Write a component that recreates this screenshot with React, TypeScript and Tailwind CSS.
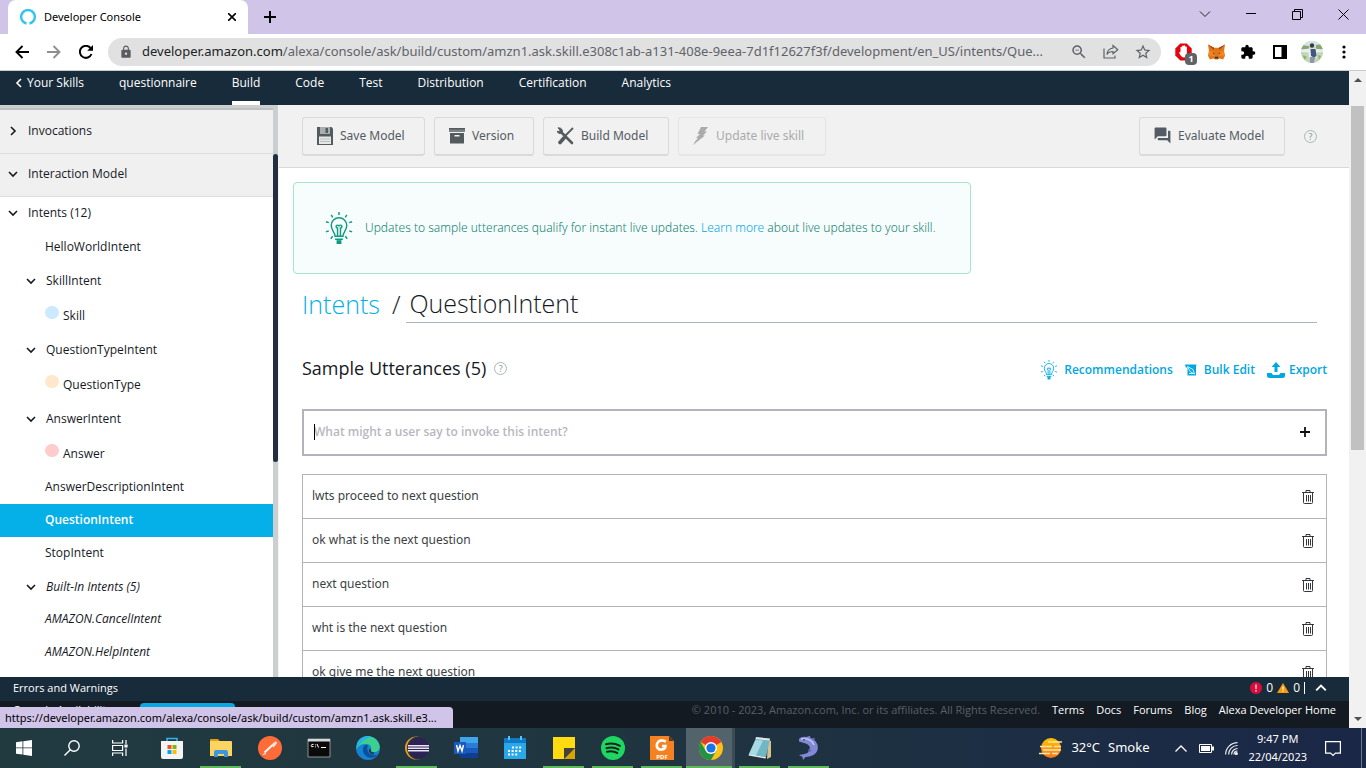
import type { ReactNode } from "react";
import { MdExtension, MdForum, MdLock, MdStarBorder, MdZoomOut } from "react-icons/md";

const chromeFont = "font-['Noto_Sans','Open_Sans',sans-serif]";

function Chevron({ dir, className = "" }: { dir: "down" | "right" | "left" | "up"; className?: string }) {
  const d = { down: "M1 3l4 4 4-4", up: "M1 7l4-4 4 4", right: "M3 1l4 4-4 4", left: "M7 1L3 5l4 4" }[dir];
  return (
    <svg viewBox="0 0 10 10" className={`h-2.5 w-2.5 shrink-0 ${className}`} fill="none" stroke="currentColor" strokeWidth="1.6">
      <path d={d} />
    </svg>
  );
}

function Bulb({ className }: { className: string }) {
  return (
    <svg viewBox="0 0 28 34" className={className} fill="none" stroke="currentColor" strokeWidth="1.5">
      <path d="M10 25c0-4-4-6-4-11a8 8 0 0 1 16 0c0 5-4 7-4 11z" />
      <path d="M12.500 25v-8.500a1.500 1.500 0 1 1 1.500-1.500a1.500 1.500 0 1 1 1.500 1.500V25M10 28h8" />
      <path d="M11.500 31h5" strokeWidth="4" />
      <path d="M14 0v3M6 3l1.500 2.500M22 3l-1.500 2.500M.5 10l3 1M27.500 10l-3 1M.5 20.500l3-1M27.500 20.500l-3-1M5.500 27.500l2-2.500M22.500 27.500l-2-2.500" />
    </svg>
  );
}

function Help() {
  return (
    <button aria-label="Help" className="grid h-[13px] w-[13px] place-items-center rounded-full border border-[#a9b7b7] text-[9px] leading-none text-[#879596]">
      ?
    </button>
  );
}

/* ---------- Browser chrome ---------- */

function TabStrip() {
  return (
    <div className="flex h-[34px] shrink-0 items-stretch bg-[#d1c4e9] text-black">
      <div className="ml-2 flex w-60 items-center rounded-t-lg bg-white pr-2 pl-3">
        <svg viewBox="0 0 16 16" className="h-4 w-4" fill="none" stroke="#31c4f3" strokeWidth="2.400">
          <path d="M6.500 14.500a6.800 6.800 0 1 1 3 0" />
        </svg>
        <span className="ml-2 flex-1 text-[11px]">Developer Console</span>
        <button aria-label="Close tab" className="p-1">
          <svg viewBox="0 0 8 8" className="h-2 w-2" stroke="#000" strokeWidth="1.600"><path d="M0 0l8 8M8 0L0 8" /></svg>
        </button>
      </div>
      <button aria-label="New tab" className="ml-2 px-2">
        <svg viewBox="0 0 12 12" className="h-3 w-3" stroke="#000" strokeWidth="2"><path d="M6 0v12M0 6h12" /></svg>
      </button>
      <div className="ml-auto flex items-center pb-1.5">
        <button aria-label="Tab search" className="grid w-[46px] place-items-center">
          <svg viewBox="0 0 12 7" className="h-[7px] w-3" fill="none" stroke="#222"><path d="M1 .5l5 5 5-5" /></svg>
        </button>
        <button aria-label="Minimise" className="grid w-[46px] place-items-center">
          <svg viewBox="0 0 10 2" className="h-0.5 w-2.5"><path d="M0 .5h10" stroke="#000" /></svg>
        </button>
        <button aria-label="Restore" className="grid w-[46px] place-items-center">
          <svg viewBox="0 0 11 11" className="h-[11px] w-[11px]" fill="none" stroke="#000"><path d="M.5 2.500h8v8h-8zM2.500 2.500v-2h8v8h-2" /></svg>
        </button>
        <button aria-label="Close" className="grid w-[46px] place-items-center">
          <svg viewBox="0 0 11 11" className="h-[11px] w-[11px]" stroke="#000"><path d="M.5.5l10 10M10.500.5l-10 10" /></svg>
        </button>
      </div>
    </div>
  );
}

function ToolbarSlot({ label, children }: { label: string; children: ReactNode }) {
  return (
    <button aria-label={label} className="grid h-8 w-8 place-items-center">
      {children}
    </button>
  );
}

function AddressBar() {
  return (
    <div className="flex h-[37px] shrink-0 items-center border-b border-[#c8cccc] bg-white text-black">
      <button aria-label="Back" className="ml-[15px]">
        <svg viewBox="0 0 14 14" className="h-3.5 w-3.5" fill="none" stroke="#000" strokeWidth="1.900"><path d="M14 7H1.500M7.500 1L1.500 7l6 6" /></svg>
      </button>
      <button aria-label="Forward" className="ml-[18px]">
        <svg viewBox="0 0 14 14" className="h-3.5 w-3.5" fill="none" stroke="#8f8f8f" strokeWidth="1.900"><path d="M0 7h12.500M6.500 1l6 6-6 6" /></svg>
      </button>
      <button aria-label="Reload" className="ml-[18px]">
        <svg viewBox="0 0 14 14" className="h-3.5 w-3.5" fill="none" stroke="#000" strokeWidth="2"><path d="M12.500 9A6 6 0 1 1 11.500 3" /><path d="M14 0v5.800H8.200z" fill="#000" stroke="none" /></svg>
      </button>
      <div className="ml-[15px] flex h-7 min-w-0 flex-1 items-center rounded-full bg-[#e1e1e1] pr-[9px] pl-[11px]">
        <MdLock className="h-3.5 w-3.5 shrink-0 text-[#5a5c60]" />
        <div className="ml-[9px] min-w-0 flex-1 truncate text-[13px] text-[#5f6368]">
          <span className="text-[#202124]">developer.amazon.com</span>/alexa/console/ask/build/custom/amzn1.ask.skill.e308c1ab-a131-408e-9eea-7d1f12627f3f/development/en_US/intents/Que...
        </div>
        <div className="flex items-center gap-[15px] text-[#5f6368]">
          <button aria-label="Zoom"><MdZoomOut className="h-[18px] w-[18px]" /></button>
          <button aria-label="Share">
            <svg viewBox="0 0 16 16" className="h-4 w-4" fill="none" stroke="currentColor" strokeWidth="1.200"><path d="M1 4.500V14h11v-2.500M10 1.500l4.800 4.200L10 9.800V7.500c-3 0-4.800.8-6 3 .3-3.800 2.300-6 6-6.500z" /></svg>
          </button>
          <button aria-label="Bookmark"><MdStarBorder className="h-[18px] w-[18px]" /></button>
        </div>
      </div>
      <div className="flex shrink-0 items-center pr-1.5 pl-[7px]">
        <ToolbarSlot label="Content blocker, 1 blocked">
          <span className="relative block h-[18px] w-[18px]">
            <svg viewBox="0 0 18 18" className="h-full w-full">
              <path d="M5.300.5h6.400l5 5v7l-5 5H5.300l-5-5v-7z" fill="#e3050b" />
              <path d="M5.500 9V4.500a.8.8 0 0 1 1.600 0V3.300a.8.8 0 0 1 1.600 0V3a.8.8 0 0 1 1.600 0v1.300a.8.8 0 0 1 1.600 0V11c0 2-1.200 3.500-3 3.500S5.500 12.800 4 9.500z" fill="#fff" />
            </svg>
            <span className="absolute top-2.5 left-2.5 h-3 w-3 rounded-sm bg-[#5f6368] text-center text-[9px] leading-3 font-bold text-white">1</span>
          </span>
        </ToolbarSlot>
        <ToolbarSlot label="Wallet">
          <svg viewBox="0 0 18 16" className="h-4 w-[17px]">
            <path d="M0 0l6.500 3.500h5L18 0l-1 7 1 5-2 4-4-1-1.500 1h-3L6 15l-4 1-2-4 1-5z" fill="#e2761b" />
            <path d="M0 0l6.500 3.500L6 6zM18 0l-6.500 3.500.5 2.500z" fill="#a8480f" />
            <path d="M1 7l5 1 1 4-6 0zM17 7l-5 1-1 4 6 0z" fill="#f6851b" />
            <path d="M5 8.500l2 1-1.500.6zM13 8.500l-2 1 1.500.6zM7.500 13h3l.5 2H7z" fill="#233447" />
          </svg>
        </ToolbarSlot>
        <ToolbarSlot label="Extensions"><MdExtension className="h-4 w-4" /></ToolbarSlot>
        <ToolbarSlot label="Side panel">
          <svg viewBox="0 0 14 14" className="h-3.5 w-3.5"><path d="M0 0h14v14H0zM2 2v10h6.500V2z" fillRule="evenodd" /></svg>
        </ToolbarSlot>
        <ToolbarSlot label="Profile">
          <svg viewBox="0 0 22 22" className="h-[22px] w-[22px]">
            <defs><clipPath id="avatar"><circle cx="11" cy="11" r="11" /></clipPath></defs>
            <g clipPath="url(#avatar)">
              <path d="M0 0h22v22H0z" fill="#c3d6b4" />
              <path d="M0 0h22v6H0z" fill="#d5e4ea" />
              <path d="M0 4l8 1v3H0zM15 4l7-1v5h-7z" fill="#8aa66f" />
              <path d="M0 9l8-1.500h6l8 1.500v2l-7 .5 1 5H8l-.5-5L0 11z" fill="#e9eef5" />
              <circle cx="11" cy="4.500" r="2.200" fill="#3a3a44" />
              <path d="M9.500 8h5l1 7-2.500 1.500L10 15z" fill="#42567c" />
              <path d="M9 16h5l-1 6H9z" fill="#8a95b3" />
              <path d="M2 14l4 2-3 3zM17 14l3 1-2 4z" fill="#8fb26e" />
            </g>
          </svg>
        </ToolbarSlot>
        <ToolbarSlot label="Browser menu">
          <svg viewBox="0 0 4 14" className="h-3.5 w-1"><circle cx="2" cy="2" r="1.600" /><circle cx="2" cy="7" r="1.600" /><circle cx="2" cy="12" r="1.600" /></svg>
        </ToolbarSlot>
      </div>
    </div>
  );
}

function PageScrollbar() {
  return (
    <div className="flex w-[17px] shrink-0 flex-col items-center bg-[#f1f1f1]">
      <svg viewBox="0 0 8 4" className="mt-[7px] h-1 w-2 shrink-0"><path d="M0 4l4-4 4 4z" fill="#505050" /></svg>
      <div className="mt-6 h-[344px] w-[13px] bg-[#c1c1c1]" />
      <svg viewBox="0 0 8 4" className="mt-auto mb-[7px] h-1 w-2 shrink-0"><path d="M0 0l4 4 4-4z" fill="#505050" /></svg>
    </div>
  );
}

/* ---------- Console page ---------- */

function ConsoleNav() {
  const tabs = ["questionnaire", "Build", "Code", "Test", "Distribution", "Certification", "Analytics"];
  return (
    <nav className="flex h-[34px] shrink-0 gap-[35px] bg-[#182b3a] pl-3.5 text-[12px] leading-5 text-white">
      <a href="#skills" className="flex items-center gap-[3px] self-start pt-0.5">
        <Chevron dir="left" />
        Your Skills
      </a>
      {tabs.map((t) => (
        <a key={t} href={`#${t}`} className={`border-b-4 pt-0.5 ${t === "Build" ? "border-white" : "border-transparent"}`}>
          {t}
        </a>
      ))}
    </nav>
  );
}

type Row = { label: string; kind: "group" | "leaf" | "slot"; color?: string; selected?: boolean; italic?: boolean };

const rows: Row[] = [
  { label: "HelloWorldIntent", kind: "leaf" },
  { label: "SkillIntent", kind: "group" },
  { label: "Skill", kind: "slot", color: "bg-[#cce9ff]" },
  { label: "QuestionTypeIntent", kind: "group" },
  { label: "QuestionType", kind: "slot", color: "bg-[#ffe8cc]" },
  { label: "AnswerIntent", kind: "group" },
  { label: "Answer", kind: "slot", color: "bg-[#ffcccc]" },
  { label: "AnswerDescriptionIntent", kind: "leaf" },
  { label: "QuestionIntent", kind: "leaf", selected: true },
  { label: "StopIntent", kind: "leaf" },
  { label: "Built-In Intents (5)", kind: "group", italic: true },
  { label: "AMAZON.CancelIntent", kind: "leaf", italic: true },
  { label: "AMAZON.HelpIntent", kind: "leaf", italic: true },
];

function TreeRow({ row }: { row: Row }) {
  const tone = row.selected ? "bg-[#05b0e8] font-semibold text-white" : "text-[#16191f]";
  const style = row.italic ? "italic" : "";
  if (row.kind === "group")
    return (
      <button className={`flex w-full items-center gap-2.5 pl-[26px] ${row.italic ? "h-[33px]" : "h-[34px]"} ${tone} ${style}`}>
        <Chevron dir="down" />
        {row.label}
      </button>
    );
  if (row.kind === "slot")
    return (
      <a href={`#${row.label}`} className={`flex h-[35px] items-center gap-1 pl-[45px] ${tone}`}>
        <span className={`mb-1.5 h-[13px] w-3.5 rounded-full ${row.color}`} />
        {row.label}
      </a>
    );
  return (
    <a href={`#${row.label}`} className={`flex h-[33px] items-center pb-0.5 pl-[45px] ${tone} ${style}`}>
      {row.label}
    </a>
  );
}

function Sidebar() {
  return (
    <aside className="flex w-[279px] shrink-0 border-r border-[#f3f3f3] bg-[#cbcfcf] pt-[3px] text-[12px]">
      <div className="min-w-0 flex-1 overflow-hidden border-t-2 border-[#bfc2c2] bg-white">
        <button className="flex h-11 w-full items-center gap-2.5 border-b border-[#dcdfdf] bg-[#f0f0f0] pb-0.5 pl-2 text-[#16191f]">
          <Chevron dir="right" />
          Invocations
        </button>
        <button className="flex h-[43px] w-full items-center gap-2.5 border-b border-[#dcdfdf] bg-[#f0f0f0] pb-0.5 pl-2 text-[#16191f]">
          <Chevron dir="down" />
          Interaction Model
        </button>
        <button className="flex h-[34px] w-full items-center gap-2.5 pb-[3px] pl-2 text-[#16191f]">
          <Chevron dir="down" />
          Intents (12)
        </button>
        {rows.map((r) => (
          <TreeRow key={r.label} row={r} />
        ))}
      </div>
      <div className="w-[5px] shrink-0 pt-[46px]">
        <div className="h-[308px] rounded-full bg-[#232f3e]" />
      </div>
    </aside>
  );
}

function ToolButton({ icon, children, width, disabled = false }: { icon: ReactNode; children: ReactNode; width: string; disabled?: boolean }) {
  return (
    <button
      disabled={disabled}
      className={`flex h-[39px] items-center gap-1.5 rounded-[3px] border border-b-2 pl-[13px] ${width} ${disabled ? "border-[#e6e6e6] text-[#a9abad]" : "border-[#d9dada] text-[#545b64]"}`}
    >
      {icon}
      {children}
    </button>
  );
}

function Toolbar() {
  return (
    <div className={`flex h-[63px] shrink-0 items-center gap-[9px] border-b border-[#d5dbdb] bg-[#f1f1f1] pr-8 pl-[23px] text-[12px] ${chromeFont}`}>
      <ToolButton
        width="w-[123px]"
        icon={
          <svg viewBox="0 0 18 18" className="h-[18px] w-[18px]">
            <path d="M1 0h14.500L17 1.500V18H1z" fill="#545b5e" />
            <path d="M4 0h10v7H4z" fill="#a9adaf" />
            <path d="M9.500 1h2.500v5H9.500z" fill="#545b5e" />
            <path d="M3 9.500h12V17H3z" fill="#e8e8e8" />
            <path d="M4 12h10M4 14.500h10" stroke="#b9bcbd" />
          </svg>
        }
      >
        Save Model
      </ToolButton>
      <ToolButton
        width="w-[100px]"
        icon={
          <svg viewBox="0 0 18 18" className="h-[18px] w-[18px]">
            <path d="M1 1h16v4H1z" fill="#7c8285" />
            <path d="M1 1h16v1.500H1zM2 6h14v10.500H2z" fill="#545b5e" />
            <path d="M6.500 8h5v1.500h-5z" fill="#f1f1f1" />
          </svg>
        }
      >
        Version
      </ToolButton>
      <ToolButton
        width="w-[126px]"
        icon={
          <svg viewBox="0 0 18 18" className="h-[18px] w-[18px]" fill="none" stroke="#545b5e">
            <path d="M4 5l11 11" strokeWidth="2.600" strokeLinecap="round" />
            <path d="M3.500 1.200L1 .8l2 2.400-1 1.600-2-.6a3.400 3.400 0 0 0 5 1.800 3.400 3.400 0 0 0-1.500-4.800z" fill="#545b5e" />
            <path d="M16 1L8 9" strokeWidth="1.800" />
            <path d="M7 11l-4 4.500" strokeWidth="3.600" strokeLinecap="round" />
          </svg>
        }
      >
        Build Model
      </ToolButton>
      <ToolButton
        disabled
        width="w-[148px]"
        icon={
          <svg viewBox="0 0 18 18" className="h-[18px] w-[18px]" fill="#a9abad">
            <path d="M9 0h7l-3.500 4.500H15l-4 4h2L3.500 16 1 18l2-3.500L6 11H4l4-4H5.500z" />
          </svg>
        }
      >
        Update live skill
      </ToolButton>
      <div className="ml-auto flex items-center gap-[19px]">
        <ToolButton width="w-[146px]" icon={<MdForum className="h-[19px] w-[19px]" />}>
          Evaluate Model
        </ToolButton>
        <Help />
      </div>
    </div>
  );
}

function Trash() {
  return (
    <svg viewBox="0 0 12 14" className="h-3.5 w-3" fill="none" stroke="#33363b">
      <path d="M0 2.500h12M4 2V.5h4V2M1.500 3v9.500q0 1 1 1h7q1 0 1-1V3M4.500 5v6.500M6.500 5v6.500M8.500 5v6.500" />
    </svg>
  );
}

function UtterancesHeader() {
  return (
    <div className="mt-[29px] flex items-center text-[#00a8e1]">
      <h2 className="text-[18px] leading-8 text-[#16191f]">Sample Utterances (5)</h2>
      <div className="ml-2 flex"><Help /></div>
      <div className="ml-auto flex items-center gap-3 pt-1 text-[12px] font-semibold">
        <button className="flex items-center gap-1.5">
          <Bulb className="h-5 w-[18px]" />
          Recommendations
        </button>
        <button className="flex items-center gap-[7px]">
          <svg viewBox="0 0 12 12" className="h-3 w-3">
            <path d="M0 .5h11.500L11 3v8.500H2.500V3.500H.8z" fill="currentColor" />
            <path d="M2.500 2.500l5.500 3 1.500 4.500L5 7.500zM4 9.500h4" stroke="#fff" strokeWidth=".8" fill="none" />
          </svg>
          Bulk Edit
        </button>
        <button className="flex items-center gap-1">
          <svg viewBox="0 0 18 16" className="h-4 w-[18px]" fill="currentColor">
            <path d="M9 0l4.500 5H10.500v5h-3V5H4.500zM0 11h4.500l1.500 2h6l1.500-2H18v2.500q0 2.500-2.500 2.500h-13Q0 16 0 13.500z" />
          </svg>
          Export
        </button>
      </div>
    </div>
  );
}

function Main() {
  const utterances = [
    "lwts proceed to next question",
    "ok what is the next question",
    "next question",
    "wht is the next question",
    "ok give me the next question",
  ];
  return (
    <main className="flex min-w-0 flex-1 flex-col overflow-hidden bg-white">
      <Toolbar />
      <div className={`mt-3.5 ml-3.5 flex h-[92px] w-[678px] max-w-full shrink-0 items-center gap-3 rounded border border-[#a3e4cb] bg-[#f7fdfd] pl-[31px] text-[12px] font-light text-[#128272] ${chromeFont}`}>
        <Bulb className="h-[33px] w-7 text-[#0f9a83]" />
        <p>
          Updates to sample utterances qualify for instant live updates. <a href="#learn" className="text-[#00a8e1]">Learn more</a> about live updates to your skill.
        </p>
      </div>
      <div className="pr-[22px] pl-[23px]">
        <div className="mt-2.5 flex items-center text-[25px] leading-9 font-light text-[#16191f]">
          <a href="#intents" className="text-[#00b0e8]">Intents</a>
          <span className="ml-3">/</span>
          <input aria-label="Intent name" defaultValue="QuestionIntent" className="mr-2.5 ml-1.5 h-[39px] min-w-0 flex-1 border-b border-[#aab7b8] pl-[3px] outline-none" />
        </div>
        <UtterancesHeader />
        <div className="relative mt-[25px] flex h-[47px] items-center border-2 border-[#b3b3bb] pr-[15px] pb-0.5 pl-2.5">
          <span className="absolute left-2.5 h-4 w-px bg-black" />
          <input aria-label="New sample utterance" placeholder="What might a user say to invoke this intent?" className="min-w-0 flex-1 text-[12px] font-semibold outline-none placeholder:text-[#b7b8c0]" />
          <button aria-label="Add utterance">
            <svg viewBox="0 0 10 10" className="h-2.5 w-2.5" stroke="#111" strokeWidth="1.800"><path d="M5 0v10M0 5h10" /></svg>
          </button>
        </div>
        <ul className={`mt-[18px] border border-[#b3b3bb] text-[12px] text-[#3c3f45] ${chromeFont}`}>
          {utterances.map((u) => (
            <li key={u} className="flex h-11 items-center justify-between border-b border-[#b3b3bb] pr-3 pl-[9px]">
              <span className="pb-0.5">{u}</span>
              <button aria-label={`Delete ${u}`}><Trash /></button>
            </li>
          ))}
        </ul>
      </div>
    </main>
  );
}

function ErrorsBar() {
  return (
    <div className="flex h-6 shrink-0 items-center bg-[#182b3a] pr-[22px] pb-0.5 pl-[13px] text-[11px] text-white">
      <span className="flex-1">Errors and Warnings</span>
      <svg viewBox="0 0 12 12" className="mr-1 h-3 w-3"><circle cx="6" cy="6" r="6" fill="#dd0b3c" /><path d="M6 2.500v4.500M6 8v1.500" stroke="#fff" strokeWidth="1.200" /></svg>
      <span className="text-[12px]">0</span>
      <svg viewBox="0 0 12 10" className="mx-1 h-2.5 w-3"><path d="M6 0l6 10H0z" fill="#f59a0b" /><path d="M6 3.500v3M6 7.500v1.200" stroke="#fff" strokeWidth="1.200" /></svg>
      <span className="text-[12px]">0</span>
      <span className="mr-2.5 ml-1 h-3 w-px bg-white" />
      <button aria-label="Expand errors"><Chevron dir="up" className="h-3 w-3" /></button>
    </div>
  );
}

function Footer() {
  return (
    <footer className="flex h-[27px] shrink-0 items-start gap-3 overflow-hidden bg-[#131a22] pr-[13px] pl-[13px] text-[11px] leading-[18px] text-white">
      <span className="w-[115px]">Console Availability</span>
      <span className="mt-0.5 h-6 w-[95px] rounded bg-[#05a8e0]" />
      <span className="ml-auto text-[#57606a]">© 2010 - 2023, Amazon.com, Inc. or its affiliates. All Rights Reserved.</span>
      {["Terms", "Docs", "Forums", "Blog", "Alexa Developer Home"].map((l) => (
        <a key={l} href={`#${l}`}>{l}</a>
      ))}
    </footer>
  );
}

/* ---------- Taskbar ---------- */

type TaskbarApp = { name: string; state?: "open" | "active"; icon: ReactNode };

const apps: TaskbarApp[] = [
  {
    name: "Store",
    icon: (
      <>
        <path d="M7 6V2.500h10V6" fill="none" stroke="#2bb5f0" strokeWidth="1.600" />
        <path d="M1 5h22v16q0 2-2 2H3q-2 0-2-2z" fill="#f4f4f4" />
        <path d="M7.500 9h4v4h-4z" fill="#f25022" /><path d="M12.500 9h4v4h-4z" fill="#7fba00" />
        <path d="M7.500 14h4v4h-4z" fill="#00a4ef" /><path d="M12.500 14h4v4h-4z" fill="#ffb900" />
      </>
    ),
  },
  {
    name: "File Explorer",
    state: "open",
    icon: (
      <>
        <path d="M1 4q0-1 1-1h7l2 2.500H1z" fill="#e0a010" />
        <path d="M1 5h21q1 0 1 1v14H1z" fill="#fcd462" />
        <path d="M5 21v-5q0-2 2-2h10q2 0 2 2v5h-4v-3H9v3z" fill="#3d97dc" />
      </>
    ),
  },
  {
    name: "Postman",
    icon: (
      <>
        <circle cx="12" cy="12" r="12" fill="#ff6c37" />
        <path d="M6.500 16.500L14 9.500" stroke="#fff" strokeWidth="1.800" />
        <path d="M13 9l4-3.500q2-.5 2 2L15.500 11.500z" fill="#ffe3d8" />
        <path d="M5 18.500l3-1" stroke="#fff" strokeWidth="1.200" />
      </>
    ),
  },
  {
    name: "Command Prompt",
    icon: (
      <>
        <path d="M1 3h22v18H1z" fill="#0b0b0b" stroke="#8d9294" />
        <path d="M1 3h22v2.500H1z" fill="#d5d8d9" />
        <path d="M6.500 8.500q-2-.8-2.300 1t2.300 1M8.500 8.500v.8M8.500 10.500v.8M10 8l1.500 3.500M14 11.500h5" stroke="#fff" fill="none" />
      </>
    ),
  },
  {
    name: "Edge",
    icon: (
      <>
        <circle cx="12" cy="12" r="12" fill="#1583d3" />
        <path d="M1 8C4-1 19-3 23 8c2 5-1 8-4.500 8-4 0-4.500-1.500-3.500-3 .8-3-2-5-5-5C6 8 2 9 .5 14z" fill="#3dcf8e" />
        <path d="M1 8C3 1 10-1 15 .5 9 3 4 6 .5 13z" fill="#27b3e8" />
        <path d="M9 9c-4 3-2 11 4 12.500 4 1 7-1 8.500-3-4 1.500-9 .5-10-4C11 12 11.500 10 12 9z" fill="#0c4f9e" />
        <path d="M14.500 13c-1.500 2 0 4.500 3.500 4.500" stroke="#213a42" strokeWidth="2" fill="none" />
      </>
    ),
  },
  {
    name: "Eclipse",
    state: "open",
    icon: (
      <>
        <circle cx="11.500" cy="12" r="11.500" fill="#f7941e" />
        <circle cx="13.500" cy="12" r="11.500" fill="#213a42" />
        <circle cx="14" cy="12" r="10.500" fill="#2c2255" />
        <path d="M3 9h21v1.500H3zM3 11.500h21V13H3zM3 14h21v1.500H3z" fill="#e9e6f2" />
      </>
    ),
  },
  {
    name: "Word",
    icon: (
      <>
        <path d="M6 1h18v6H6z" fill="#41a5ee" /><path d="M6 7h18v5H6z" fill="#2b7cd3" /><path d="M6 12h18v5H6z" fill="#185abd" /><path d="M6 17h18v5H6z" fill="#103f91" />
        <path d="M0 6h12v12H0z" fill="#185abd" />
        <path d="M2.500 9l1.500 6 2-5.500L8 15l1.500-6" stroke="#fff" strokeWidth="1.400" fill="none" />
      </>
    ),
  },
  {
    name: "Calendar",
    icon: (
      <>
        <path d="M1 2h22v21H1z" fill="#29a8ec" /><path d="M1 2h22v5H1z" fill="#1379c4" />
        <path d="M6 0v4M18 0v4" stroke="#53c6f8" strokeWidth="2" />
        <path d="M9 11.500h10M5 15h14M5 18.500h10" stroke="#fff" strokeWidth="2" strokeDasharray="2 1.600" />
      </>
    ),
  },
  {
    name: "Sticky Notes",
    state: "open",
    icon: (
      <>
        <path d="M1 1h22v11L12 23H1z" fill="#ffdb10" /><path d="M23 12v11H12z" fill="#d9a300" /><path d="M12 12h11L12 23z" fill="#41413f" />
      </>
    ),
  },
  {
    name: "Spotify",
    state: "open",
    icon: (
      <>
        <circle cx="12" cy="12" r="12" fill="#1ed760" />
        <path d="M5 8.300q7-2 14 1.500M5.500 12.200q6.500-1.800 12 1.200M6 15.800q5.500-1.400 10.300 1.200" stroke="#12241c" strokeWidth="2" strokeLinecap="round" fill="none" />
      </>
    ),
  },
  {
    name: "PDF Reader",
    state: "open",
    icon: (
      <>
        <path d="M0 0h19l5 5v19H0z" fill="#f58220" /><path d="M19 0v5h5z" fill="#5a3a20" />
        <path d="M16 5.500q-7-3-9 2.500c-1 4 2 6 5 5.500s3.500-2 3.500-3.500H12" fill="none" stroke="#fff" strokeWidth="2.600" />
        <text x="12" y="22.500" textAnchor="middle" fontSize="6" fontWeight="700" fill="#fff">PDF</text>
      </>
    ),
  },
  {
    name: "Chrome",
    state: "active",
    icon: (
      <>
        <circle cx="12" cy="12" r="12" fill="#fbc116" />
        <path d="M12 12L1.600 6A12 12 0 0 1 22.400 6z" fill="#e33b2e" />
        <path d="M1.600 6A12 12 0 0 0 12 24l5.200-9L12 12 6.800 15z" fill="#229342" />
        <circle cx="12" cy="12" r="6" fill="#fff" /><circle cx="12" cy="12" r="4.600" fill="#1a73e8" />
      </>
    ),
  },
  {
    name: "Notepad",
    state: "open",
    icon: (
      <>
        <path d="M20 4l3 1v16l-4 2z" fill="#d9c08a" />
        <path d="M8 2l14 1-4 18-17-3z" fill="#6fb7c6" />
        <path d="M7.500 4L15 4.500 8 19.500l-7-1.500z" fill="#a9d9e2" />
        <path d="M8 1l14 1.500-.5 2L7.500 3z" fill="#dfe6e8" />
        <path d="M1 18l17 3-.5 1.500L.5 19.500z" fill="#e6eff2" />
      </>
    ),
  },
  {
    name: "MySQL Workbench",
    state: "open",
    icon: (
      <>
        <path d="M2 3c2-2 4-2.500 7-2l4-1 .5 2C19 4 22 9 20.500 14c-1 3.500-4 5.500-8 6.500l-4 .5L6 24l-.5-3L2 19l5.500-1C12 17 14 14 12.500 10.500 11.500 8.500 9.500 7.500 7 7L2 5.500z" fill="#8489d6" />
        <path d="M12 12l3 3-4 1zM14 2l4 0-1 2.500z" fill="#6267b8" />
        <path d="M4 3c6-1 11 1 13 6" stroke="#c5c8f2" strokeWidth="1.500" fill="none" />
        <circle cx="7" cy="3.800" r=".8" fill="#1e2550" />
      </>
    ),
  },
];

function Taskbar() {
  return (
    <div className="flex h-10 shrink-0 items-stretch bg-linear-to-r from-[#213a40] via-[#1f3440] to-[#1a2747] text-white">
      <button aria-label="Start" className="grid w-12 place-items-center">
        <svg viewBox="0 0 16 16" className="h-4 w-4" fill="#fff"><path d="M0 2.200l6.500-.9v6.200H0zM7.300 1.200L16 0v7.500H7.300zM0 8.300h6.500v6.300L0 13.700zM7.300 8.300H16V16l-8.700-1.200z" /></svg>
      </button>
      <button aria-label="Search" className="grid w-12 place-items-center">
        <svg viewBox="0 0 16 16" className="h-4 w-4" fill="none" stroke="#fff" strokeWidth="1.400"><circle cx="10" cy="6" r="5.200" /><path d="M6.300 9.700L.5 15.500" /></svg>
      </button>
      <button aria-label="Task view" className="grid w-12 place-items-center">
        <svg viewBox="0 0 16 16" className="h-4 w-4" fill="none" stroke="#fff" strokeWidth="1.200"><path d="M.6 0v3h10V0M.6 16v-3h10v3M.6 5.500h10v5H.6zM14 0v4M14 8.500V16" /><path d="M13 5h2v2h-2z" fill="#fff" /></svg>
      </button>
      <div className="ml-[3px] flex">
        {apps.map((a) => (
          <button key={a.name} aria-label={a.name} className={`relative flex w-[49px] items-center justify-center ${a.state === "active" ? "border-r-3 border-[#3d4b54] bg-[#52636b] pl-[3px]" : ""}`}>
            <svg viewBox="0 0 24 24" className="h-6 w-6">{a.icon}</svg>
            {a.state && <span className={`absolute bottom-0 h-0.5 bg-[#5fb85a] ${a.state === "active" ? "inset-x-0" : "inset-x-1"}`} />}
          </button>
        ))}
      </div>
      <div className="ml-auto flex items-center">
        <button className="flex items-center gap-2 text-[13px]">
          <svg viewBox="0 0 24 20" className="h-5 w-6">
            <defs><linearGradient id="sun" x1="0" y1="0" x2="0" y2="1"><stop offset="0" stopColor="#ffc400" /><stop offset="1" stopColor="#f3761b" /></linearGradient></defs>
            <circle cx="12" cy="10" r="10" fill="url(#sun)" />
            <path d="M9 4h14M1 8.500h12M15 8.500h7M4 12h18M0 15.500h11M13 15.500h6" stroke="#ffe2ae" strokeWidth="1.700" />
          </svg>
          <span>32°C</span>
          <span>Smoke</span>
        </button>
        <button aria-label="Hidden icons" className="ml-[26px]">
          <svg viewBox="0 0 12 7" className="h-[7px] w-3" fill="none" stroke="#fff" strokeWidth="1.300"><path d="M.5 6.500L6 1l5.500 5.500" /></svg>
        </button>
        <svg viewBox="0 0 15 9" className="ml-3 h-[9px] w-[15px]"><path d="M.5.5h12v8H.5z" fill="none" stroke="#fff" /><path d="M2 2h9v5H2zM13 2.500h2v4h-2z" fill="#fff" /></svg>
        <svg viewBox="0 0 13 13" className="ml-[11px] h-[13px] w-[13px]" fill="none" stroke="#e8ecef" strokeWidth="1.200"><path d="M.6 12.500A12 12 0 0 1 12.500.6M3.600 12.500a9 9 0 0 1 9-9M6.600 12.500a6 6 0 0 1 6-6M9 12.500a3.500 3.500 0 0 1 3.500-3.500" /><circle cx="11.300" cy="11.500" r="1" fill="#fff" /></svg>
        <div className="ml-2.5 text-center text-[11px] leading-[18px]">
          <div>9:47 PM</div>
          <div>22/04/2023</div>
        </div>
        <button aria-label="Notifications" className="mr-5 ml-[18px] pt-0.5">
          <svg viewBox="0 0 16 16" className="h-4 w-4" fill="none" stroke="#fff" strokeWidth="1.200"><path d="M.6.6h14.800v11.500h-5L8 14.500l-2.400-2.400h-5z" /></svg>
        </button>
        <div className="mr-1 h-10 w-px bg-[#6b7690]" />
      </div>
    </div>
  );
}

export default function App() {
  return (
    <div className="flex h-screen flex-col overflow-hidden font-['Open_Sans','Noto_Sans',sans-serif]">
      <div className={chromeFont}>
        <TabStrip />
        <AddressBar />
      </div>
      <div className="relative flex min-h-0 flex-1">
        <div className="flex min-w-0 flex-1 flex-col">
          <ConsoleNav />
          <div className="flex min-h-0 flex-1">
            <Sidebar />
            <Main />
          </div>
          <ErrorsBar />
          <Footer />
        </div>
        <PageScrollbar />
        <div className={`absolute bottom-0 left-0 w-[453px] rounded-tr bg-[#d1c4e9] pl-[5px] text-[11px] leading-[21px] text-black ${chromeFont}`}>
          https://developer.amazon.com/alexa/console/ask/build/custom/amzn1.ask.skill.e3...
        </div>
      </div>
      <div className={chromeFont}>
        <Taskbar />
      </div>
    </div>
  );
}
